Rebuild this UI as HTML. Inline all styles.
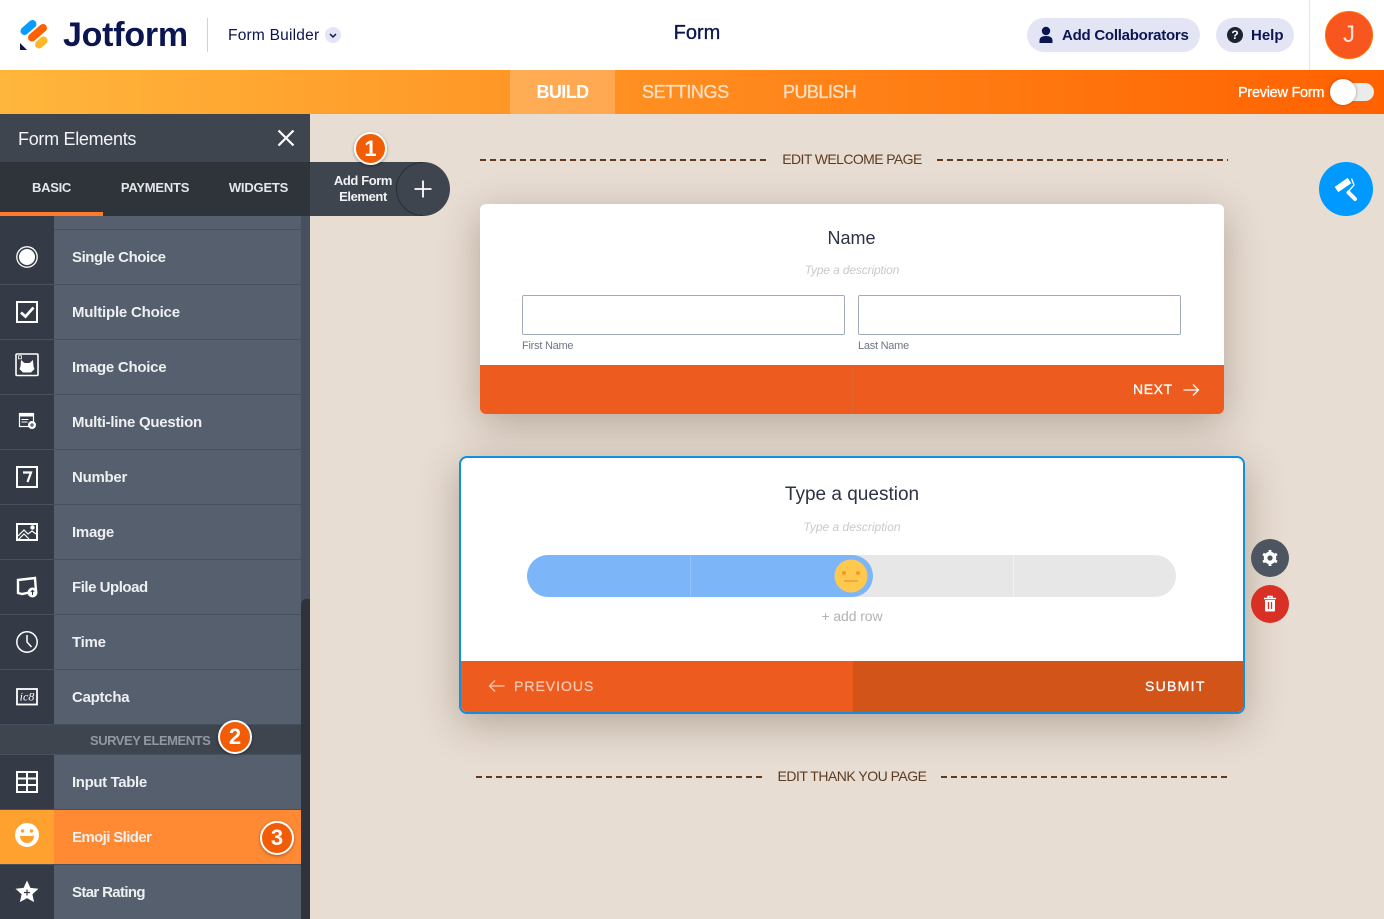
<!DOCTYPE html>
<html><head><meta charset="utf-8"><title>Form Builder</title>
<style>
*{box-sizing:border-box}
html,body{margin:0;padding:0;width:1384px;height:919px;overflow:hidden;background:#e8ddd3;font-family:"Liberation Sans",sans-serif}
.a{position:absolute;white-space:nowrap}
.row{position:absolute;left:0;width:301px;height:55px;background:#555f6e;border-bottom:1px solid #465160}
.row .ic{position:absolute;left:0;top:0;width:54px;height:54px;background:#343b47}
.row .ic svg{position:absolute;left:0;top:0}
.row .t{position:absolute;left:72px;top:19px;font-size:15px;line-height:18px;color:#eef0f2;font-weight:700;letter-spacing:-.27px;white-space:nowrap}
.badge{position:absolute;border-radius:50%;background:#f25c05;border:2px solid #fff;color:#fff;font-size:22px;font-weight:700;text-align:center;box-shadow:0 1px 3px rgba(0,0,0,.35)}
.card{position:absolute;background:#fff;box-shadow:0 10px 40px rgba(60,40,20,.3)}
.ctr{position:absolute;text-align:center;white-space:nowrap}
.dash{position:absolute;height:2px;background:repeating-linear-gradient(90deg,#5f3a1d 0 6px,transparent 6px 10px)}
.med{-webkit-text-stroke:.3px currentColor}
</style></head>
<body>
<!-- header -->
<div class="a" style="left:0;top:0;width:1384px;height:70px;background:#fff"></div>
<svg class="a" style="left:0;top:0" width="60" height="60" viewBox="0 0 60 60">
<line x1="24.500" y1="31" x2="32.500" y2="24" stroke="#0a9bff" stroke-width="8" stroke-linecap="round"/>
<line x1="32" y1="37.500" x2="43" y2="28" stroke="#ff6100" stroke-width="8" stroke-linecap="round"/>
<line x1="39" y1="44.500" x2="43.500" y2="40.500" stroke="#ffb629" stroke-width="8" stroke-linecap="round"/>
<path d="M20 43v7h7z" fill="#0a1551"/>
</svg>
<div class="a" style="left:63px;top:15px;font-size:34px;line-height:40px;font-weight:700;color:#0a1551;letter-spacing:-.25px">Jotform</div>
<div class="a" style="left:207px;top:18px;width:1px;height:34px;background:#ccd3e0"></div>
<div class="a" style="left:228px;top:27px;font-size:15.500px;line-height:18px;color:#0a1551;letter-spacing:.22px">Form Builder</div>
<div class="a" style="left:325px;top:27px;width:16px;height:16px;border-radius:50%;background:#e3e5f5"></div>
<svg class="a" style="left:325px;top:27px" width="16" height="16"><path d="M5 7l3 3 3-3" fill="none" stroke="#0a1551" stroke-width="1.500"/></svg>
<div class="ctr med" style="left:597px;width:200px;top:22px;font-size:20px;line-height:23px;color:#0a1551">Form</div>
<div class="a" style="left:1027px;top:18px;width:173px;height:34px;border-radius:17px;background:#e3e5f5"></div>
<svg class="a" style="left:1038px;top:26px" width="16" height="18" viewBox="0 0 16 18"><circle cx="8" cy="5" r="4.200" fill="#0a1551"/><path d="M1.500 17v-2.500C1.500 11.500 4 10 8 10s6.500 1.500 6.500 4.500V17z" fill="#0a1551"/></svg>
<div class="a" style="left:1062px;top:27px;font-size:15px;line-height:18px;font-weight:700;color:#0a1551;letter-spacing:-.25px">Add Collaborators</div>
<div class="a" style="left:1216px;top:18px;width:78px;height:34px;border-radius:17px;background:#e3e5f5"></div>
<div class="a" style="left:1227px;top:27px;width:16px;height:16px;border-radius:50%;background:#1b2433;color:#fff;font-size:12px;line-height:16px;text-align:center;font-weight:700">?</div>
<div class="a" style="left:1251px;top:27px;font-size:15px;line-height:18px;font-weight:700;color:#0a1551">Help</div>
<div class="a" style="left:1309px;top:0;width:1px;height:70px;background:#e3e5ea"></div>
<div class="a" style="left:1325px;top:11px;width:48px;height:48px;border-radius:50%;background:#f9561f;border:1px solid #ff6f00;color:#ffe3d8;font-size:24px;line-height:46px;text-align:center">J</div>

<!-- orange nav -->
<div class="a" style="left:0;top:70px;width:1384px;height:44px;background:linear-gradient(90deg,#ffb63c 0,#ff6100 100%)"></div>
<div class="a" style="left:510px;top:70px;width:105px;height:44px;background:rgba(255,255,255,.22)"></div>
<div class="ctr" style="left:510px;width:105px;top:81px;font-size:18px;line-height:22px;color:#fff;font-weight:700;letter-spacing:-.6px">BUILD</div>
<div class="a med" style="left:642px;top:81px;font-size:18px;line-height:22px;color:#ffe0c4;letter-spacing:-.42px">SETTINGS</div>
<div class="a med" style="left:783px;top:81px;font-size:18px;line-height:22px;color:#ffe0c4;letter-spacing:-.55px">PUBLISH</div>
<div class="a med" style="left:1238px;top:84px;font-size:14.500px;line-height:18px;color:#fff;letter-spacing:-.27px">Preview Form</div>
<div class="a" style="left:1332px;top:83px;width:42px;height:18px;border-radius:9px;background:#e9eceb"></div>
<div class="a" style="left:1330px;top:79px;width:26px;height:26px;border-radius:50%;background:#fff;box-shadow:0 0 3px rgba(120,50,0,.5)"></div>

<!-- sidebar -->
<div class="a" style="left:0;top:114px;width:310px;height:48px;background:#3e454f"></div>
<div class="a" style="left:18px;top:127px;font-size:18px;line-height:24px;color:#f3f4f5;letter-spacing:-.3px">Form Elements</div>
<svg class="a" style="left:276px;top:128px" width="20" height="20"><path d="M2.500 2.500l15 15M17.500 2.500l-15 15" stroke="#fff" stroke-width="2.200"/></svg>
<div class="a" style="left:0;top:162px;width:310px;height:54px;background:#2f343b"></div>
<div class="ctr" style="left:0;width:103px;top:180px;font-size:13px;line-height:16px;font-weight:700;color:#e4e6e9;letter-spacing:-.3px">BASIC</div>
<div class="ctr" style="left:103px;width:104px;top:180px;font-size:13px;line-height:16px;font-weight:700;color:#e4e6e9;letter-spacing:-.22px">PAYMENTS</div>
<div class="ctr" style="left:207px;width:103px;top:180px;font-size:13px;line-height:16px;font-weight:700;color:#e4e6e9;letter-spacing:-.2px">WIDGETS</div>
<div class="a" style="left:0;top:212px;width:103px;height:4px;background:#ff7b29"></div>

<div class="a" style="left:0;top:216px;width:301px;height:14px;background:#555f6e;border-bottom:1px solid #465160"></div>
<div class="a" style="left:0;top:216px;width:54px;height:14px;background:#343b47"></div>
<div class="a" style="left:301px;top:216px;width:9px;height:703px;background:#465060"></div>
<div class="a" style="left:301px;top:599px;width:9px;height:320px;background:#2f343b;border-radius:5px 0 0 0"></div>

<div class="row" style="top:230px"><div class="ic"><svg width="54" height="54"><circle cx="27" cy="27" r="10.200" fill="none" stroke="#fff" stroke-width="1.300"/><circle cx="27" cy="27" r="8" fill="#fff"/></svg></div><div class="t" style="letter-spacing:-.43px">Single Choice</div></div>
<div class="row" style="top:285px"><div class="ic"><svg width="54" height="54"><rect x="17" y="17" width="20" height="20" fill="none" stroke="#fff" stroke-width="2"/><path d="M21 27.500l4.500 4 8-9" fill="none" stroke="#fff" stroke-width="2.800"/></svg></div><div class="t" style="letter-spacing:-.2px">Multiple Choice</div></div>
<div class="row" style="top:340px"><div class="ic"><svg width="54" height="54"><rect x="16" y="14" width="22" height="21.500" rx="1" fill="none" stroke="#fff" stroke-width="1.600"/><rect x="18.500" y="15.800" width="3" height="3" fill="none" stroke="#fff" stroke-width=".8"/><path d="M21 20l3.500 3h5l3.500-3 .5 6.500 1 2.500-3.500 3.500h-8l-3.500-3.500 1-2.500z" fill="#fff"/></svg></div><div class="t">Image Choice</div></div>
<div class="row" style="top:395px"><div class="ic"><svg width="54" height="54"><rect x="19.500" y="18.500" width="14" height="13" fill="none" stroke="#fff" stroke-width="1.200"/><rect x="19.500" y="18.500" width="14" height="3" fill="#fff"/><path d="M21.500 24.500h7M21.500 27h6" stroke="#fff"/><circle cx="32" cy="30" r="4" fill="#fff"/><path d="M30 30h4M32 28v4" stroke="#343b47"/></svg></div><div class="t">Multi-line Question</div></div>
<div class="row" style="top:450px"><div class="ic"><svg width="54" height="54"><rect x="17" y="17" width="20" height="20" fill="none" stroke="#fff" stroke-width="2"/><path d="M23 22.500h8l-3.500 9.500" fill="none" stroke="#fff" stroke-width="2.200"/></svg></div><div class="t">Number</div></div>
<div class="row" style="top:505px"><div class="ic"><svg width="54" height="54"><rect x="17" y="19" width="20" height="16" fill="none" stroke="#fff" stroke-width="2"/><path d="M18 31l6-6 4 4 4-3 4 3M18 35l6-6 5 5" fill="none" stroke="#fff" stroke-width="1.200"/><circle cx="32.500" cy="22.500" r="2.200" fill="#fff"/></svg></div><div class="t">Image</div></div>
<div class="row" style="top:560px"><div class="ic"><svg width="54" height="54"><path d="M18 20l17-2 1 13-14 3-4-1z" fill="none" stroke="#fff" stroke-width="2.400"/><circle cx="32.500" cy="32.500" r="5" fill="#fff"/><path d="M32.500 35v-4.500M30.800 32l1.700-1.700 1.700 1.700" fill="none" stroke="#343b47"/></svg></div><div class="t" style="letter-spacing:-.47px">File Upload</div></div>
<div class="row" style="top:615px"><div class="ic"><svg width="54" height="54"><circle cx="27" cy="27" r="10.200" fill="none" stroke="#fff" stroke-width="1.500"/><path d="M27 20v7l4.500 5" fill="none" stroke="#fff" stroke-width="1.500"/></svg></div><div class="t">Time</div></div>
<div class="row" style="top:670px"><div class="ic"><svg width="54" height="54"><rect x="17" y="19" width="20" height="15.500" fill="none" stroke="#fff" stroke-width="1.800"/><text x="27" y="30.500" text-anchor="middle" font-family="Liberation Serif,serif" font-style="italic" font-size="12" fill="#fff">ic8</text></svg></div><div class="t">Captcha</div></div>

<div class="a" style="left:0;top:725px;width:301px;height:30px;background:#3e454f;border-bottom:1px solid #465160"></div>
<div class="a" style="left:90px;top:733px;font-size:13px;line-height:16px;font-weight:700;color:#9297a0;letter-spacing:-.47px">SURVEY ELEMENTS</div>

<div class="row" style="top:755px"><div class="ic"><svg width="54" height="54"><path d="M17 17h20v20H17z" fill="none" stroke="#fff" stroke-width="2"/><path d="M17 23.500h20M17 30h20M27 17v20" stroke="#fff" stroke-width="2"/></svg></div><div class="t" style="letter-spacing:-.37px">Input Table</div></div>
<div class="row" style="top:810px;background:#ff8a33;border-bottom-color:#465160"><div class="ic" style="background:#ffa12e"><svg width="54" height="54"><circle cx="27" cy="25" r="12" fill="#fff"/><circle cx="22.500" cy="21" r="1.700" fill="#ffa12e"/><circle cx="31.500" cy="21" r="1.700" fill="#ffa12e"/><path d="M20 26h14c0 4-3 7-7 7s-7-3-7-7z" fill="#ffa12e"/></svg></div><div class="t" style="letter-spacing:-.62px">Emoji Slider</div></div>
<div class="row" style="top:865px;height:54px;border:0"><div class="ic"><svg width="54" height="54"><path d="M27 15.500l3.400 7.400 8 .9-6 5.400 1.700 7.900-7.100-4-7.100 4 1.700-7.900-6-5.400 8-.9z" fill="#fff"/><path d="M24 27.500h6M27 24.500v6" stroke="#343b47" stroke-width="1.200"/></svg></div><div class="t" style="letter-spacing:-.65px">Star Rating</div></div>

<!-- add form element -->
<div class="a" style="left:310px;top:162px;width:140px;height:54px;background:#3e454f;border-radius:0 27px 27px 0"></div>
<svg class="a" style="left:396px;top:162px" width="54" height="54"><path d="M27 .5A26.500 26.500 0 0 0 27 53.500" fill="none" stroke="#2a2e35"/></svg>
<div class="ctr" style="left:310px;width:106px;top:173px;font-size:13px;line-height:16px;font-weight:700;color:#f1f2f3;letter-spacing:-.4px">Add Form<br>Element</div>
<svg class="a" style="left:413px;top:179px" width="20" height="20"><path d="M10 1.500v17M1.500 10h17" stroke="#fff" stroke-width="1.800"/></svg>

<!-- canvas -->
<div class="dash" style="left:480px;top:159px;width:288px"></div>
<div class="ctr" style="left:752px;width:200px;top:151px;font-size:14px;line-height:17px;color:#5c3c21;letter-spacing:-.6px">EDIT WELCOME PAGE</div>
<div class="dash" style="left:937px;top:159px;width:291px"></div>

<div class="card" style="left:480px;top:204px;width:744px;height:210px;border-radius:6px;overflow:hidden">
  <div class="ctr" style="left:0;width:743px;top:23px;font-size:18px;line-height:22px;color:#2c3345">Name</div>
  <div class="ctr" style="left:0;width:744px;top:59px;font-size:12px;line-height:15px;font-style:italic;color:#c9c9c9;letter-spacing:-.15px">Type a description</div>
  <div class="a" style="left:42px;top:91px;width:323px;height:40px;border:1px solid #a0acbc;border-radius:2px"></div>
  <div class="a" style="left:378px;top:91px;width:323px;height:40px;border:1px solid #a0acbc;border-radius:2px"></div>
  <div class="a" style="left:42px;top:135px;font-size:11px;line-height:14px;color:#6f7587;letter-spacing:-.25px">First Name</div>
  <div class="a" style="left:378px;top:135px;font-size:11px;line-height:14px;color:#6f7587;letter-spacing:-.25px">Last Name</div>
  <div class="a" style="left:0;top:161px;width:744px;height:49px;background:#ed5c1e"></div>
  <div class="a" style="left:372px;top:161px;width:1px;height:49px;background:#e2662f"></div>
  <div class="a med" style="left:653px;top:177px;font-size:14px;line-height:17px;color:#fff;letter-spacing:.6px">NEXT</div>
  <svg class="a" style="left:703px;top:179px" width="17" height="14"><path d="M.5 7h15M10 1.500L15.500 7 10 12.500" fill="none" stroke="#fff" stroke-width="1.300"/></svg>
</div>

<div class="card" style="left:459px;top:456px;width:786px;height:258px;border:2px solid #0f8fdc;border-radius:8px;overflow:hidden">
  <div class="ctr" style="left:0;width:782px;top:25px;font-size:19px;line-height:24px;color:#2c3345">Type a question</div>
  <div class="ctr" style="left:0;width:782px;top:62px;font-size:12px;line-height:15px;font-style:italic;color:#c9c9c9">Type a description</div>
  <div class="a" style="left:66px;top:97px;width:649px;height:42px;border-radius:21px;background:#e7e7e7;overflow:hidden">
    <div class="a" style="left:486px;top:0;width:1px;height:42px;background:#f2f2f2"></div>
  </div>
  <div class="a" style="left:66px;top:97px;width:346px;height:42px;border-radius:21px;background:#7db5f9"></div>
  <div class="a" style="left:229px;top:97px;width:1px;height:42px;background:#95c2fa"></div>
  <svg class="a" style="left:373px;top:101px" width="34" height="34"><circle cx="17" cy="17" r="16.500" fill="#ffc94f"/><circle cx="10" cy="14" r="2" fill="#f09a2e"/><circle cx="24" cy="14" r="2" fill="#f09a2e"/><path d="M10 22h14" stroke="#f09a2e" stroke-width="1.500"/></svg>
  <div class="ctr" style="left:0;width:782px;top:150px;font-size:14px;line-height:17px;color:#b3b3b3;letter-spacing:-.1px">+ add row</div>
  <div class="a" style="left:0;top:203px;width:392px;height:51px;background:#ed5c1e"></div>
  <div class="a" style="left:392px;top:203px;width:390px;height:51px;background:#d35418"></div>
  <svg class="a" style="left:27px;top:221px" width="17" height="14"><path d="M16.500 7h-15M7 1.500L1.500 7 7 12.500" fill="none" stroke="#fbc8b2" stroke-width="1.300"/></svg>
  <div class="a med" style="left:53px;top:220px;font-size:14px;line-height:17px;color:#fbc8b2;letter-spacing:1px">PREVIOUS</div>
  <div class="a med" style="left:684px;top:220px;font-size:14px;line-height:17px;color:#fff;letter-spacing:1.300px">SUBMIT</div>
</div>

<div class="a" style="left:1251px;top:539px;width:38px;height:38px;border-radius:50%;background:#4c5560"></div>
<svg class="a" style="left:1259px;top:547px" width="22" height="22" viewBox="0 0 22 22"><circle cx="11" cy="11" r="6.200" fill="#fff"/><path d="M11 3v16M4.070 7l13.860 8M4.070 15l13.860-8" stroke="#fff" stroke-width="2.800"/><circle cx="11" cy="11" r="2.600" fill="#4c5560"/></svg>
<div class="a" style="left:1251px;top:585px;width:38px;height:38px;border-radius:50%;background:#d93026"></div>
<svg class="a" style="left:1262px;top:595px" width="16" height="18" viewBox="0 0 16 18"><path d="M2 3.500h12M6 3V1.500h4V3" fill="none" stroke="#fff" stroke-width="1.500"/><path d="M3 5h10v10.500a1 1 0 0 1-1 1H4a1 1 0 0 1-1-1z" fill="#fff"/><path d="M6.500 7v7M9.500 7v7" stroke="#d93026" stroke-width="1.300"/></svg>

<div class="dash" style="left:476px;top:776px;width:288px"></div>
<div class="ctr" style="left:752px;width:200px;top:768px;font-size:14px;line-height:17px;color:#5c3c21;letter-spacing:-.5px">EDIT THANK YOU PAGE</div>
<div class="dash" style="left:941px;top:776px;width:287px"></div>

<div class="a" style="left:1319px;top:162px;width:54px;height:54px;border-radius:50%;background:#0099ff"></div>
<svg class="a" style="left:1332px;top:175px" width="28" height="28" viewBox="0 0 28 28"><path d="M4.500 14.500L17.500 5.500" stroke="#fff" stroke-width="6.500"/><path d="M19.500 3.500L22 10 16 17" fill="none" stroke="#fff" stroke-width="1.300"/><path d="M16.500 17.500L23 24" stroke="#fff" stroke-width="4" stroke-linecap="round"/></svg>

<!-- badges -->
<div class="badge" style="left:354px;top:132px;width:33px;height:33px;line-height:29px">1</div>
<div class="badge" style="left:218px;top:720px;width:34px;height:34px;line-height:30px">2</div>
<div class="badge" style="left:260px;top:821px;width:34px;height:34px;line-height:30px">3</div>
</body></html>
